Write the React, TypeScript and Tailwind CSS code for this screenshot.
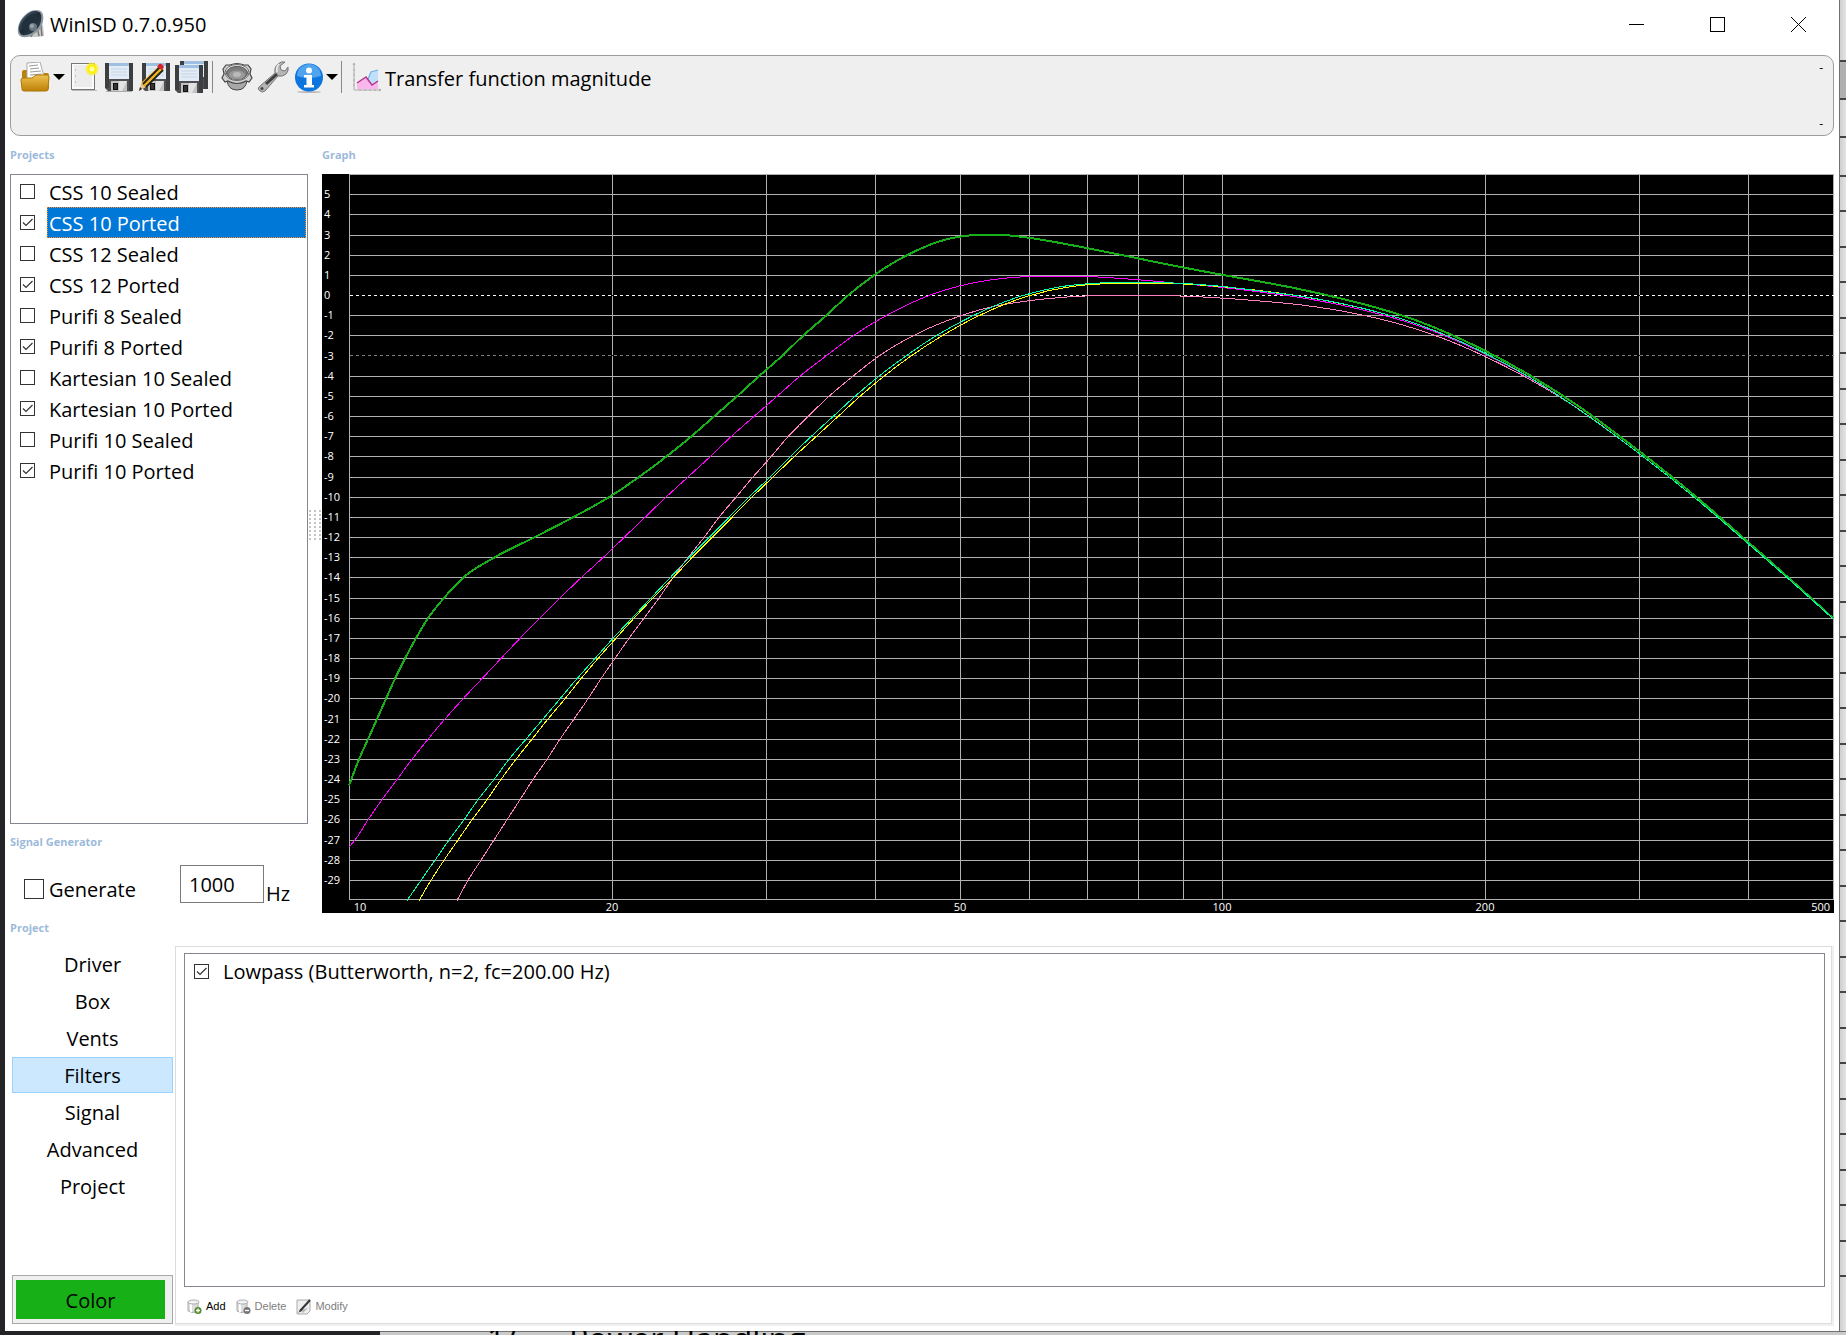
import type { ReactNode } from "react";

type Point = [number, number];

const projects = [
  { name: "CSS 10 Sealed", on: false },
  { name: "CSS 10 Ported", on: true, selected: true },
  { name: "CSS 12 Sealed", on: false },
  { name: "CSS 12 Ported", on: true },
  { name: "Purifi 8 Sealed", on: false },
  { name: "Purifi 8 Ported", on: true },
  { name: "Kartesian 10 Sealed", on: false },
  { name: "Kartesian 10 Ported", on: true },
  { name: "Purifi 10 Sealed", on: false },
  { name: "Purifi 10 Ported", on: true },
];

const tabs = ["Driver", "Box", "Vents", "Filters", "Signal", "Advanced", "Project"];

// Plot area inside the 1512x739 chart
const LEFT = 27;
const WIDTH = 1484;
const HEIGHT = 725;
const DB_TOP = 6;
const DB_BOTTOM = -30;

const yOf = (db: number) => ((DB_TOP - db) * (HEIGHT + 1)) / (DB_TOP - DB_BOTTOM);
const xOf = (hz: number) => LEFT + (Math.log10(hz / 10) / Math.log10(50)) * WIDTH;

// Above 250 Hz every curve follows the low-pass filter
const rolloff: Point[] = [
  [1221, -5.35], [1290, -7.83], [1349, -10.16], [1399, -12.3], [1444, -14.25], [1484, -16.03],
];

// [plot x, dB]
const curves: { color: string; width: number; points: Point[] }[] = [
  {
    color: "#18b018",
    width: 2,
    points: [
      [0, -24.3], [10, -23], [19, -22], [28, -21], [37, -20], [46, -19], [56, -18], [67, -17], [79, -16],
      [95, -15], [114, -14], [145, -13], [185, -12], [224, -11], [260, -10], [290, -9], [317, -8], [342, -7],
      [365, -6], [388, -5], [410, -4], [433, -3], [454, -2], [477, -1], [499, 0], [525, 1], [558, 2],
      [573, 2.35], [590, 2.68], [611, 2.92], [639, 3.02], [660, 2.98], [680, 2.86], [738, 2.35], [789, 1.84],
      [834, 1.39], [873, 1.03], [951, 0.31], [1027, -0.6], [1055, -1.02], [1086, -1.6], [1136, -2.74],
      [1181, -3.96], [1221, -5.2], [1290, -7.71], [1349, -10.06], [1399, -12.22], [1444, -14.19], [1484, -16],
    ],
  },
  {
    color: "#ff80c0",
    width: 1,
    points: [
      [108, -30], [119, -29], [132, -28], [145, -27], [158, -26], [171, -25], [184, -24], [198, -23],
      [211, -22], [225, -21], [239, -20], [252, -19], [266, -18], [280, -17], [295, -16], [310, -15],
      [324, -14], [339, -13], [355, -12], [370, -11], [387, -10], [404, -9], [422, -8], [439, -7], [459, -6],
      [480, -5], [504, -4], [530, -3], [564, -2], [612, -1], [641, -0.58], [680, -0.26], [711, -0.1],
      [738, -0.02], [784, 0], [834, -0.03], [873, -0.13], [918, -0.3], [951, -0.46], [1027, -1.12],
      [1055, -1.48], [1086, -1.98], [1136, -3.02], [1181, -4.17], ...rolloff,
    ],
  },
  {
    color: "#ff00ff",
    width: 1,
    points: [
      [0, -27.35], [6, -27], [19, -26], [33, -25], [48, -24], [63, -23], [79, -22], [96, -21], [114, -20],
      [133, -19], [152, -18], [171, -17], [191, -16], [211, -15], [232, -14], [254, -13], [275, -12],
      [296, -11], [317, -10], [339, -9], [361, -8], [382, -7], [405, -6], [428, -5], [451, -4], [477, -3],
      [504, -2], [537, -1], [580, 0], [611, 0.48], [636, 0.73], [680, 0.94], [711, 0.96], [738, 0.94],
      [789, 0.78], [834, 0.58], [873, 0.4], [911, 0.17], [951, -0.1], [1027, -0.88], [1055, -1.27],
      [1086, -1.8], [1136, -2.9], [1181, -4.09], ...rolloff,
    ],
  },
  {
    color: "#ffff00",
    width: 1,
    points: [
      [70, -30], [82, -29], [95, -28], [109, -27], [123, -26], [138, -25], [152, -24], [167, -23], [183, -22],
      [199, -21], [216, -20], [232, -19], [249, -18], [267, -17], [285, -16], [304, -15], [324, -14],
      [343, -13], [363, -12], [383, -11], [403, -10], [424, -9], [445, -8], [467, -7], [489, -6], [511, -5],
      [535, -4], [562, -3], [593, -2], [630, -1], [681, 0], [718, 0.41], [738, 0.53], [768, 0.6], [811, 0.6],
      [834, 0.57], [864, 0.47], [918, 0.2], [951, -0.03], [1027, -0.8], [1055, -1.2], [1086, -1.75],
      [1136, -2.86], [1181, -4.07], ...rolloff,
    ],
  },
  {
    color: "#00ffaa",
    width: 1,
    points: [
      [58, -30], [72, -29], [86, -28], [100, -27], [115, -26], [129, -25], [145, -24], [160, -23], [177, -22],
      [194, -21], [211, -20], [228, -19], [246, -18], [264, -17], [283, -16], [302, -15], [321, -14],
      [340, -13], [360, -12], [380, -11], [400, -10], [421, -9], [441, -8], [462, -7], [484, -6], [506, -5],
      [530, -4], [557, -3], [587, -2], [624, -1], [674, 0], [711, 0.43], [738, 0.58], [768, 0.65],
      [818, 0.63], [834, 0.6], [873, 0.45], [918, 0.18], [951, -0.03], [1027, -0.8], [1055, -1.2],
      [1086, -1.75], [1136, -2.86], [1181, -4.07], ...rolloff,
    ],
  },
];

// Hermite spline, slopes weighted by the distance to each neighbour
function curvePath(points: Point[]) {
  const p = points.map(([x, db]): Point => [x + LEFT, yOf(db) + 0.5]);
  const slope = (i: number) => (p[i + 1][1] - p[i][1]) / (p[i + 1][0] - p[i][0]);
  const tangents = p.map((_, i) => {
    if (i === 0) return slope(0);
    if (i === p.length - 1) return slope(i - 1);
    const before = p[i][0] - p[i - 1][0];
    const after = p[i + 1][0] - p[i][0];
    return (slope(i - 1) * after + slope(i) * before) / (before + after);
  });
  let d = `M${p[0][0]} ${p[0][1].toFixed(2)}`;
  for (let i = 0; i < p.length - 1; i++) {
    const [x0, y0] = p[i];
    const [x1, y1] = p[i + 1];
    const h = (x1 - x0) / 3;
    d += `C${[x0 + h, y0 + h * tangents[i], x1 - h, y1 - h * tangents[i + 1], x1, y1]
      .map((n) => n.toFixed(2))
      .join(" ")}`;
  }
  return d;
}

function Graph() {
  const rows = Array.from({ length: 35 }, (_, i) => 5 - i);
  const cols = [20, 30, 40, 50, 60, 70, 80, 90, 100, 200, 300, 400];
  const xLabels = [20, 50, 100, 200];

  return (
    <svg viewBox="0 0 1512 739" className="block h-auto w-full bg-black" role="img" aria-label="Transfer function magnitude">
      <g stroke="#b0b0b0" fill="none" shapeRendering="crispEdges" transform="translate(0.5 0.5)">
        {cols.map((hz) => (
          <path key={hz} d={`M${Math.round(xOf(hz))} 0V${HEIGHT}`} />
        ))}
        {rows
          .filter((db) => db !== 0 && db !== -3)
          .map((db) => (
            <path key={db} d={`M${LEFT} ${Math.round(yOf(db))}H1511`} />
          ))}
        <path d={`M${LEFT} 0H1511V${HEIGHT}H${LEFT}Z`} />
        <path d={`M${LEFT} 121H1511M${LEFT} 181H1511`} stroke="#000" />
        <path d={`M${LEFT} 121H1511`} stroke="#fff" strokeDasharray="3 3" />
        <path d={`M${LEFT} 181H1511`} stroke="#808080" strokeDasharray="3 3" />
      </g>
      <g fill="none" shapeRendering="crispEdges">
        {curves.map((c) => (
          <path key={c.color} d={curvePath(c.points)} stroke={c.color} strokeWidth={c.width} />
        ))}
      </g>
      <g className="fill-white font-['Open_Sans',sans-serif] text-[11px]">
        {rows.map((db) => (
          <text key={db} x={2} y={Math.round(yOf(db)) + 4}>{db}</text>
        ))}
        <text x={38} y={737} textAnchor="middle">10</text>
        {xLabels.map((hz) => (
          <text key={hz} x={Math.round(xOf(hz))} y={737} textAnchor="middle">{hz}</text>
        ))}
        <text x={1508} y={737} textAnchor="end">500</text>
      </g>
    </svg>
  );
}

function Check({ id, checked, big }: { id: string; checked?: boolean; big?: boolean }) {
  return (
    <span className="relative block shrink-0">
      <input
        id={id}
        type="checkbox"
        defaultChecked={checked}
        className={`peer block appearance-none border border-[#333] bg-white ${big ? "size-5" : "size-[15px]"}`}
      />
      <svg viewBox="0 0 15 15" className="pointer-events-none absolute inset-0 hidden peer-checked:block" fill="none" stroke="#333">
        <path d="M3 7.500l3 3 6.500-6.500" strokeWidth="1.200" />
      </svg>
    </span>
  );
}

function Caption({ children }: { children: ReactNode }) {
  return <h2 className="text-[11px] leading-4 font-bold text-[#9cbada]">{children}</h2>;
}

function SpeakerLogo() {
  return (
    <svg viewBox="0 0 28 28" className="size-7">
      <defs>
        <linearGradient id="cone" x1="0" y1="0" x2="1" y2="1">
          <stop offset="0" stopColor="#5d7080" />
          <stop offset="0.5" stopColor="#1d2a35" />
          <stop offset="1" stopColor="#3b4a56" />
        </linearGradient>
      </defs>
      <path d="M17 14l9 1 1 11-6 1-15 0z" fill="#c9c9c9" />
      <path d="M20 17l2 9M24 16l1 10M17 21l-3 6" stroke="#777" strokeWidth="1.500" />
      <path d="M19 0c7 0 8 5 7 11-1 7-4 10-9 13-4 3-12 5-15 1C-1 20 2 11 7 6c3-3 7-6 12-6z" fill="#8d979e" />
      <path d="M18 1c6 0 7 4 6 10-1 6-5 9-9 12-4 2-10 4-12 0C0 18 3 11 8 6c3-3 6-5 10-5z" fill="url(#cone)" />
      <path d="M16 4c4 0 5 3 4 7s-3 7-7 9-7 1-8-2 1-7 4-10 5-4 7-4z" fill="#20303c" />
      <ellipse cx="16" cy="17" rx="4" ry="4" fill="#6b7780" />
      <ellipse cx="15" cy="16" rx="2" ry="2" fill="#98a3aa" />
    </svg>
  );
}

function FolderIcon() {
  return (
    <svg viewBox="0 0 30 30" className="size-[30px]">
      <defs>
        <linearGradient id="gold" x1="0" y1="0" x2="0" y2="1">
          <stop offset="0" stopColor="#eec24e" />
          <stop offset="1" stopColor="#bd8008" />
        </linearGradient>
      </defs>
      <ellipse cx="15" cy="28" rx="14" ry="1.500" fill="#ccc" />
      <path d="M2 10q0-2 2-2h4l3 3h16q2 0 2 2v13q0 2-2 2H4q-2 0-2-2z" fill="#b8820f" />
      <path d="M7 1l13-1 4 14-17 4z" fill="#fff" stroke="#aaa" />
      <path d="M9 4l9-1M10 7l9-1M10 10l11-1M10 13l12-1" stroke="#999" />
      <path d="M1 18q0-2 2-2h9l4-3h11q2 0 2 2l-1 12q0 2-2 2H4q-2 0-2-2z" fill="url(#gold)" stroke="#b07a0a" />
    </svg>
  );
}

function NewIcon() {
  return (
    <svg viewBox="0 0 28 30" className="h-[30px] w-7">
      <path d="M1 28h25v1H1z" fill="#bbb" />
      <rect x="0.500" y="1.500" width="23" height="26" fill="#fbfbfb" stroke="#777" />
      <path d="M3 3h18v22H3z" fill="#ececec" />
      <path d="M4 8h1M4 14h1M4 20h1" stroke="#999" />
      <circle cx="21" cy="7" r="6.500" fill="#f8ee30" opacity="0.75" />
      <circle cx="21" cy="7" r="4.500" fill="#fff000" />
      <circle cx="21" cy="7" r="2.500" fill="#fffcae" />
    </svg>
  );
}

function Disk() {
  return (
    <g>
      <path d="M0 0h28v28H3l-3-3z" fill="#4d4f52" />
      <path d="M0 0h4v25l-4 0zM24 0h4v28h-4z" fill="#3c3e40" />
      <rect x="4" y="0" width="20" height="16" fill="#e2ecf7" />
      <path d="M4 0h20v3H4z" fill="#9fc0e0" />
      <path d="M6 6h16M6 9h16M6 12h16" stroke="#c7d4e2" />
      <rect x="6" y="18" width="16" height="10" fill="#c2c2c2" />
      <path d="M14 18h8l-5 10h-3z" fill="#e3e3e3" />
      <rect x="8.500" y="20.500" width="4" height="6" fill="#333" stroke="#111" />
    </g>
  );
}

function SaveIcon() {
  return (
    <svg viewBox="0 -1 28 30" className="h-[30px] w-7">
      <path d="M1 28h26v1H1z" fill="#aaa" />
      <Disk />
    </svg>
  );
}

function SaveAsIcon() {
  return (
    <svg viewBox="0 -1 32 30" className="h-[30px] w-8">
      <g transform="translate(3 0)"><Disk /></g>
      <path d="M0 28l2-8 5 4z" fill="#e6c692" />
      <path d="M0 28l1-4 2 2z" fill="#222" />
      <path d="M2 20L20 3l5 4L7 24z" fill="#f2b61c" />
      <path d="M4 21L21 4M7 24L24 7" stroke="#222" strokeWidth="1.800" />
      <path d="M18 4l2-3q3-1 5 3l-2 3z" fill="#d8222a" />
    </svg>
  );
}

function SaveAllIcon() {
  return (
    <svg viewBox="0 0 33 32" className="h-8 w-[33px]">
      <g transform="translate(5 0)"><Disk /></g>
      <path d="M0 4h28v28H0z" fill="#efefef" opacity="0.4" />
      <g transform="translate(0 4)"><Disk /></g>
    </svg>
  );
}

function DriverIcon() {
  return (
    <svg viewBox="0 0 32 30" className="h-[30px] w-8">
      <path d="M6 18q1 10 10 10t10-10z" fill="#a8a8a8" stroke="#444" />
      <path d="M2 7l3-4 4 0q7-3 14 0l4 0 3 4-1 5 2 4-3 4-3-1q-9 5-18 0l-3 1-3-4 2-4z" fill="#cfcfcf" stroke="#444" strokeWidth="1.200" />
      <ellipse cx="16" cy="10.500" rx="12" ry="8" fill="#e4e4e4" stroke="#666" />
      <ellipse cx="16" cy="11" rx="10.500" ry="6.500" fill="#7d7d7d" stroke="#555" />
      <ellipse cx="16" cy="13" rx="8" ry="4.500" fill="#999" />
      <ellipse cx="16" cy="12.500" rx="4" ry="2.500" fill="#b9b9b9" />
    </svg>
  );
}

function WrenchIcon() {
  return (
    <svg viewBox="0 0 32 32" className="size-8">
      <path
        d="M2 26L18 12q-1-6 3-9 3-3 7-2l-5 4 1 4 4 1 3-4q1 4-2 7-3 3-8 2L8 30q-3 2-5 0-3-2-1-4z"
        fill="#b5b5b5"
        stroke="#777"
      />
      <path d="M9 23L20 13" stroke="#3f3f3f" strokeWidth="3" />
      <path d="M22 3q-3 3-2 8" stroke="#eee" strokeWidth="1.500" fill="none" />
      <circle cx="5" cy="27.500" r="1.500" fill="#444" />
    </svg>
  );
}

function InfoIcon() {
  return (
    <svg viewBox="0 0 30 31" className="h-[31px] w-[30px]">
      <ellipse cx="16" cy="30" rx="12" ry="1" fill="#bbb" />
      <circle cx="16" cy="15.500" r="14" fill="#0c76de" />
      <path d="M4 14a12 12 0 0 1 24 0q-12 4-24 0z" fill="#4fa3ef" />
      <circle cx="16" cy="8.500" r="3" fill="#fff" />
      <path d="M11 13h8v10h2v2.500H11V23h2.500v-7.500H11z" fill="#fff" />
    </svg>
  );
}

function ChartIcon() {
  return (
    <svg viewBox="0 0 30 30" className="size-[30px]" fill="none">
      <path d="M16 18l3-7 7-3v12l-6 3z" fill="#bfe0f8" />
      <path d="M16 17l3-7 7-2" stroke="#6fb1ec" strokeWidth="1.300" />
      <path d="M5 21l9-6 6 8 6-4v8H5z" fill="#fbb6ee" />
      <path d="M5 21l9-6 6 8 6-4" stroke="#b5368c" strokeWidth="1.500" />
      <path d="M2 2v26h26M1 3l1-2 1 2M27 27l2 1-2 1M1 8h2M1 13h2M1 18h2M1 23h2M8 27v2M13 27v2M18 27v2M23 27v2" stroke="#aaa" />
    </svg>
  );
}

function Caret() {
  return (
    <svg viewBox="0 0 12 6" className="h-1.5 w-3">
      <path d="M0 0h12L6 6z" fill="#000" />
    </svg>
  );
}

function BinIcon({ kind }: { kind: "add" | "delete" }) {
  return (
    <svg viewBox="0 0 16 16" className="size-4">
      <path d="M1 3v9q5 3 10 0V3z" fill="#dcdcdc" stroke="#aaa" />
      <path d="M3 5v8h2V5z" fill="#fff" />
      <ellipse cx="6.500" cy="3" rx="5.500" ry="2" fill="#f4f4f4" stroke="#aaa" />
      <circle cx="11" cy="11.500" r="3.500" fill={kind === "add" ? "#4f8a2c" : "#777"} />
      <path d={kind === "add" ? "M9 11.500h4M11 9.500v4" : "M9 11.500h4"} stroke="#fff" strokeWidth="1.300" />
    </svg>
  );
}

function ModifyIcon() {
  return (
    <svg viewBox="0 0 16 16" className="size-4">
      <path d="M1 1h13v11l-3 3H1z" fill="#eee" stroke="#aaa" />
      <path d="M4 11l8-2-5 5z" fill="#bbb" />
      <path d="M4 12L14 1" stroke="#333" strokeWidth="2" />
      <path d="M2 14l2-3 1 1z" fill="#333" />
    </svg>
  );
}

function TitleBar() {
  return (
    <header className="flex h-[55px] justify-between">
      <div className="flex items-start gap-[5px] pt-2.5 pl-3">
        <SpeakerLogo />
        <h1 className="leading-[30px]">WinISD 0.7.0.950</h1>
      </div>
      <div className="flex h-[49px]">
        <button aria-label="Minimize" className="flex w-[81px] items-center justify-center">
          <span className="h-px w-[15px] bg-black" />
        </button>
        <button aria-label="Maximize" className="flex w-[81px] items-center justify-center">
          <span className="size-[15px] border border-black" />
        </button>
        <button aria-label="Close" className="flex w-[81px] items-center justify-center">
          <svg viewBox="0 0 15 15" className="size-[15px]" stroke="#000">
            <path d="M0 0l15 15M15 0L0 15" />
          </svg>
        </button>
      </div>
    </header>
  );
}

function Toolbar() {
  return (
    <div className="mx-[5px] flex h-[81px] items-start justify-between rounded-[10px] border border-[#9c9c9c] bg-[#efefef] pt-[5px] pr-2.5 pl-[9px]">
      <div className="flex h-8 items-center">
        <button aria-label="Open" className="flex items-center gap-[3px]">
          <FolderIcon />
          <Caret />
        </button>
        <button aria-label="New" className="ml-1.5"><NewIcon /></button>
        <button aria-label="Save" className="ml-1.5"><SaveIcon /></button>
        <button aria-label="Save as" className="ml-1.5"><SaveAsIcon /></button>
        <button aria-label="Save all" className="ml-1"><SaveAllIcon /></button>
        <span className="ml-1 h-8 w-px bg-[#888]" />
        <button aria-label="Drivers" className="ml-2"><DriverIcon /></button>
        <button aria-label="Options" className="ml-1"><WrenchIcon /></button>
        <button aria-label="About" className="ml-1 flex items-center gap-[3px]">
          <InfoIcon />
          <Caret />
        </button>
        <span className="ml-[3px] h-8 w-px bg-[#888]" />
        <button className="ml-2.5 flex items-center gap-[3px]">
          <ChartIcon />
          <span className="pt-1 leading-7">Transfer function magnitude</span>
        </button>
      </div>
      <div className="flex h-[70px] flex-col justify-between text-xs leading-[14px]">
        <span>-</span>
        <span>-</span>
      </div>
    </div>
  );
}

function Sidebar() {
  return (
    <aside className="flex w-[298px] shrink-0 flex-col">
      <div className="py-[11px]"><Caption>Projects</Caption></div>
      <ul className="h-[650px] border border-[#828790] p-px">
        {projects.map((p, i) => (
          <li key={p.name} className="flex h-[31px] items-center gap-3 pl-2">
            <Check id={`project-${i}`} checked={p.on} />
            <label
              htmlFor={`project-${i}`}
              className={`flex-1 border border-dotted pt-0.5 pl-px leading-[27px] ${
                p.selected ? "border-[#ff8728] bg-[#0078d7] text-white" : "border-transparent"
              }`}
            >
              {p.name}
            </label>
          </li>
        ))}
      </ul>
      <div className="pt-2.5"><Caption>Signal Generator</Caption></div>
      <div className="flex pt-[15px] pl-3.5">
        <div className="flex h-[38px] w-[156px] items-center gap-[5px] pt-2.5">
          <Check id="generate" big />
          <label htmlFor="generate" className="pt-0.5">Generate</label>
        </div>
        <input
          aria-label="Frequency"
          defaultValue="1000"
          className="h-[38px] w-[84px] border border-[#7a7a7a] bg-white pl-2"
        />
        <span className="pt-[15px] pl-0.5 leading-7">Hz</span>
      </div>
    </aside>
  );
}

function Splitter() {
  return (
    <div className="grid w-3.5 shrink-0 content-center justify-center">
      <div className="grid grid-cols-3 gap-x-[3px] gap-y-0.5">
        {Array.from({ length: 24 }, (_, i) => (
          <span key={i} className="size-0.5 bg-[#c4c4c4]" />
        ))}
      </div>
    </div>
  );
}

function ProjectPanel() {
  return (
    <section className="flex flex-1 flex-col">
      <div className="pt-[7px] pb-2.5"><Caption>Project</Caption></div>
      <div className="flex flex-1 gap-0.5 pb-[5px]">
        <nav className="flex w-[163px] shrink-0 flex-col gap-px pb-0.5 pl-0.5">
          {tabs.map((t) => (
            <button
              key={t}
              className={`h-9 border pt-0.5 leading-8 ${
                t === "Filters" ? "border-[#99d1ff] bg-[#cce8ff]" : "border-transparent"
              }`}
            >
              {t}
            </button>
          ))}
          <button className="mt-auto flex h-[49px] border border-[#a8a8a8] bg-[#f0f0f0] py-1 pr-[7px] pl-[3px]">
            <span className="flex-1 bg-[#17b017] pt-0.5 leading-[37px]">Color</span>
          </button>
        </nav>
        <div className="flex flex-1 border-r-2 border-b-2 border-[#f0f0f0]">
          <div className="flex flex-1 flex-col border border-[#dcdcdc] pt-1.5 pr-1.5 pl-2">
            <div className="flex-1 border border-[#828790] pt-0.5">
              <div className="flex h-[31px] items-center gap-3.5 pl-[9px]">
                <Check id="lowpass" checked />
                <label htmlFor="lowpass">Lowpass (Butterworth, n=2, fc=200.00 Hz)</label>
              </div>
            </div>
            <div className="flex h-9 items-center gap-2.5 pt-1 pl-[3px] font-['Liberation_Sans',sans-serif] text-[11px] text-[#808080]">
              <button className="flex items-center gap-[3px] text-black"><BinIcon kind="add" />Add</button>
              <button className="flex items-center gap-[3px]"><BinIcon kind="delete" />Delete</button>
              <button className="flex items-center gap-[3px]"><ModifyIcon />Modify</button>
            </div>
          </div>
        </div>
      </div>
    </section>
  );
}

// Edge of the sheet that shows behind the window
function BackdropGrid() {
  return (
    <div className="flex w-1.5 shrink-0 flex-col bg-gradient-to-r from-[#cfcfcf] to-[#e4e4e4]">
      <span className="h-[62px] border-b-2 border-[#444]" />
      <span className="h-[38px] border-b-2 border-[#444] bg-[#b0b0b0]" />
      <span className="h-[38px] border-b-2 border-[#444]" />
      <span className="h-[39px] border-b-2 border-[#444]" />
      {Array.from({ length: 31 }, (_, i) => (
        <span key={i} className={`border-b-2 border-[#444] ${i % 2 ? "h-9" : "h-[35px]"}`} />
      ))}
    </div>
  );
}

export default function App() {
  return (
    <div className="flex min-h-screen flex-col bg-[#242328] font-['Open_Sans',sans-serif] text-xl text-black">
      <div className="flex flex-1 pl-[5px]">
        <main className="flex min-w-0 flex-1 flex-col border-r border-[#707070] bg-white">
          <TitleBar />
          <Toolbar />
          <div className="flex px-[5px]">
            <Sidebar />
            <Splitter />
            <section className="min-w-0 flex-1">
              <div className="py-[11px]"><Caption>Graph</Caption></div>
              <Graph />
            </section>
          </div>
          <div className="flex flex-1 px-[5px]">
            <ProjectPanel />
          </div>
        </main>
        <BackdropGrid />
      </div>
      <div className="flex h-1 overflow-hidden pl-[380px]">
        <div className="flex flex-1 gap-[52px] border-t border-[#707070] bg-[#cacaca] pl-[107px] text-[32px] leading-[14px]">
          <span>1/</span>
          <span>Power Handling</span>
        </div>
      </div>
    </div>
  );
}
